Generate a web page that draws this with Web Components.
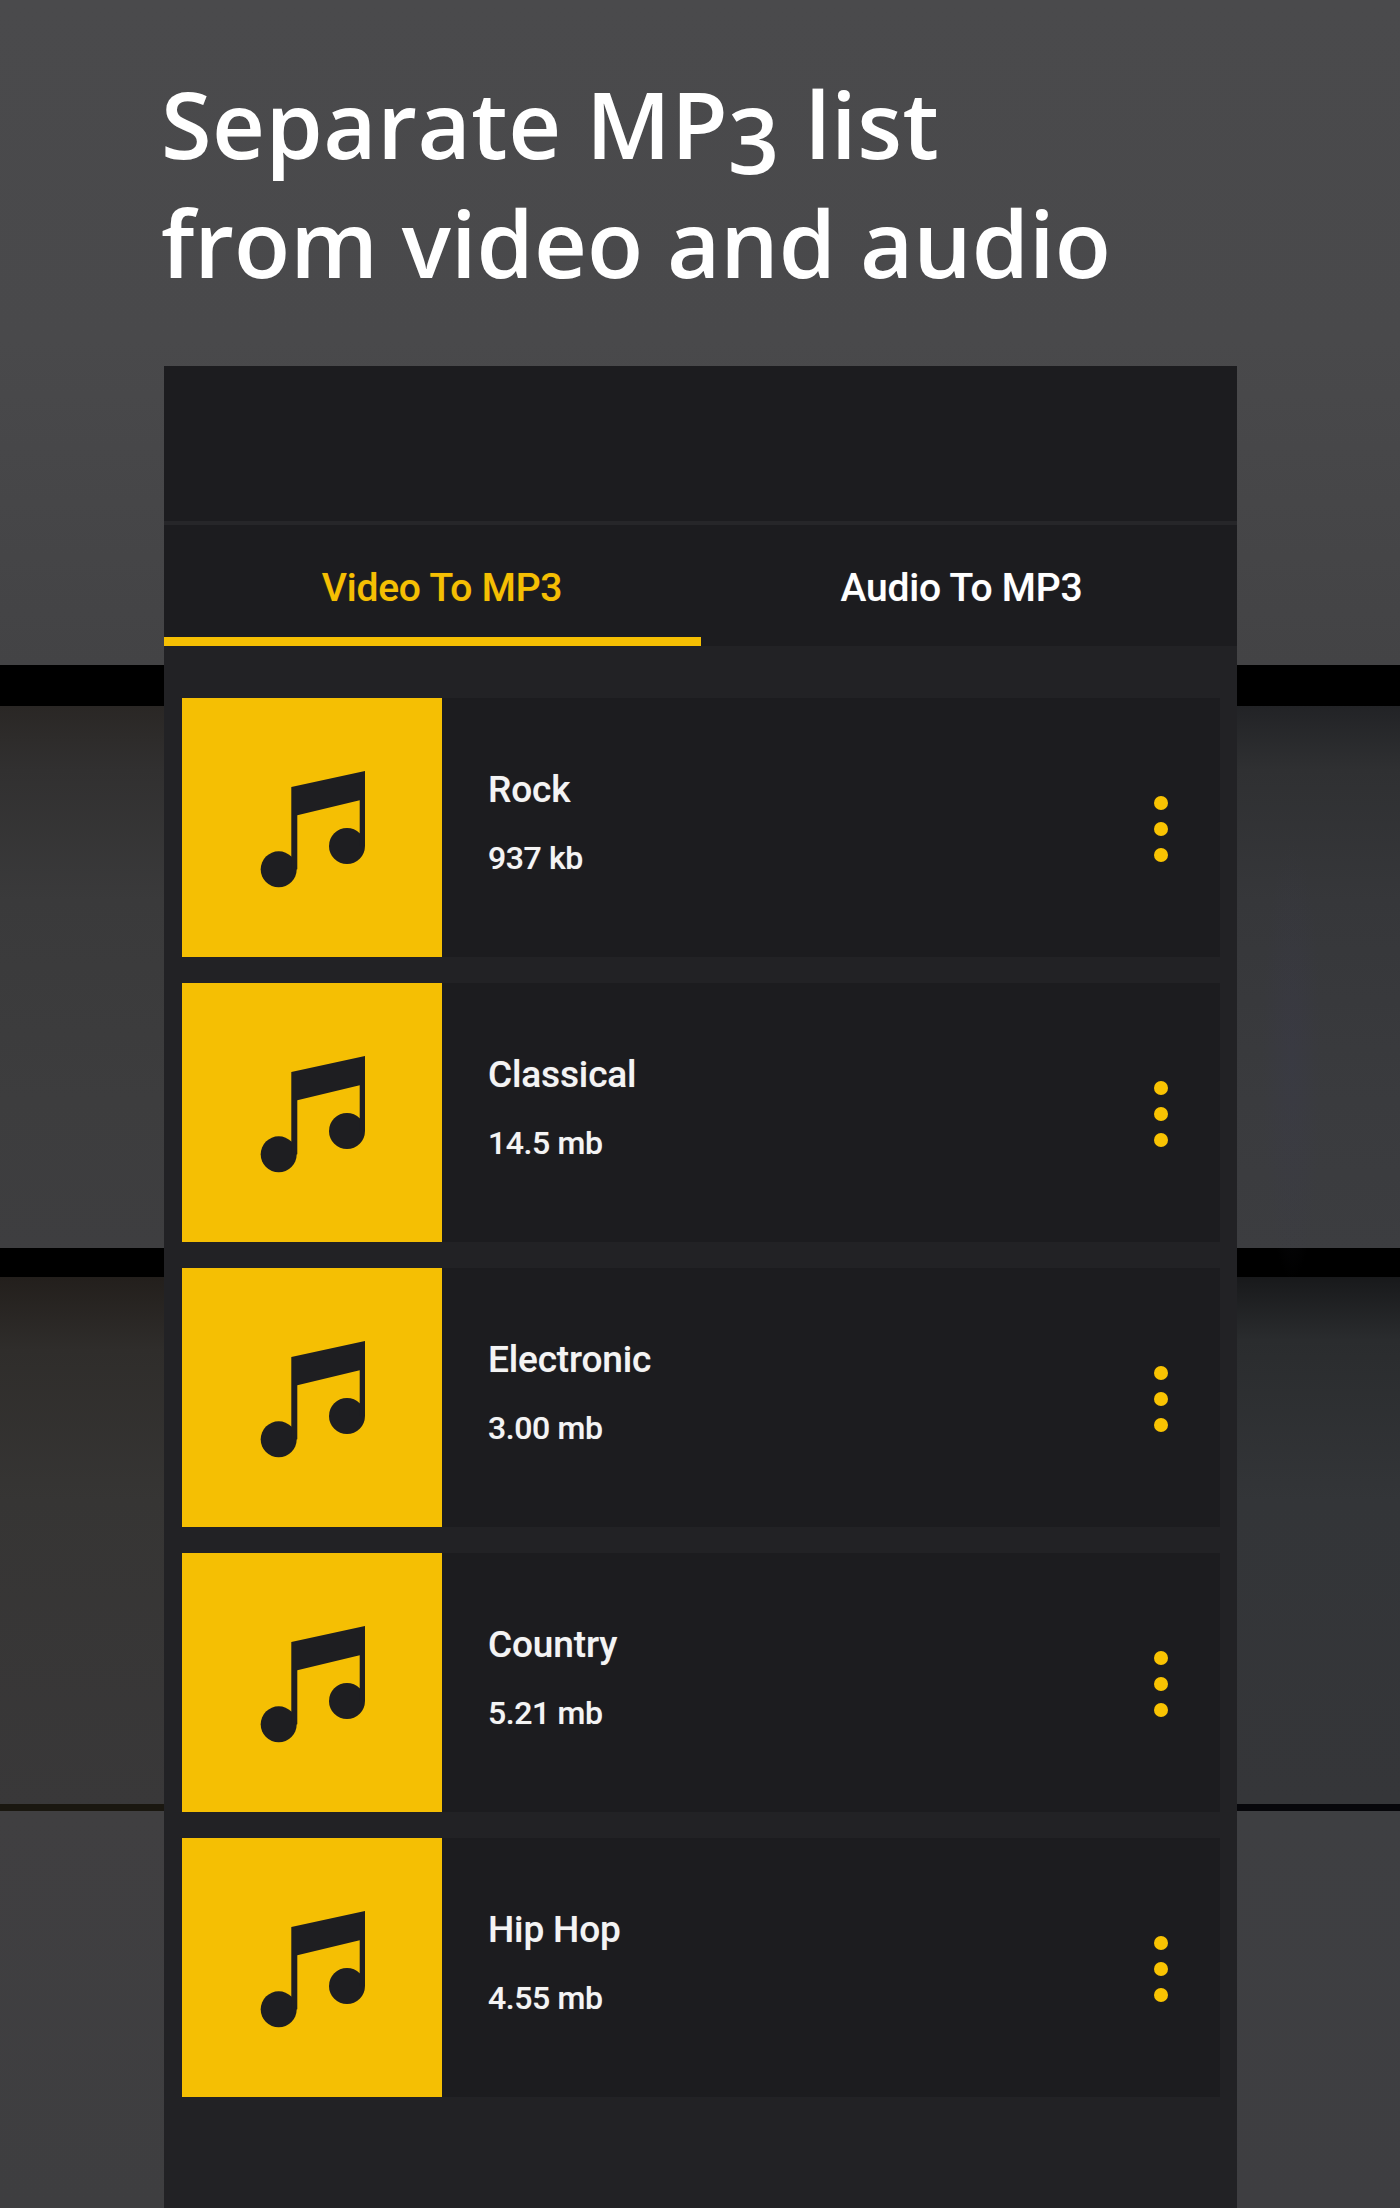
<!DOCTYPE html>
<html>
<head>
<meta charset="utf-8">
<title>Separate MP3 list</title>
<style>
  html, body { margin: 0; background: #3f3f41; }
</style>
</head>
<body>
<mp3-shot>
  <shot-title><span style="letter-spacing:.5px">Separate MP3 list</span><br>from video and audio</shot-title>
  <mp3-panel>
    <mp3-tab slot="tabs" active>Video To MP3</mp3-tab>
    <mp3-tab slot="tabs">Audio To MP3</mp3-tab>
    <mp3-row><span slot="name">Rock</span><span slot="size">937 kb</span></mp3-row>
    <mp3-row><span slot="name">Classical</span><span slot="size">14.5 mb</span></mp3-row>
    <mp3-row><span slot="name">Electronic</span><span slot="size">3.00 mb</span></mp3-row>
    <mp3-row><span slot="name">Country</span><span slot="size">5.21 mb</span></mp3-row>
    <mp3-row><span slot="name">Hip Hop</span><span slot="size">4.55 mb</span></mp3-row>
  </mp3-panel>
</mp3-shot>

<script>
class Mp3Shot extends HTMLElement {
  constructor() {
    super();
    this.attachShadow({ mode: "open" });
    // the wall behind the panel: left strip, right strip, and the whole width for the top part
    this.shadowRoot.innerHTML = `
      <style>
        :host {
          display: flex;
          flex-direction: column;
          width: 1400px;
          height: 2208px;
          overflow: hidden;
          background:
            radial-gradient(ellipse 30px 220px at 1292px 1060px, rgba(58,58,76,.35), rgba(58,58,76,0)),
            linear-gradient(180deg,
              rgba(0,0,0,0) 665px,
              #000 665px, #000 706px,
              #2a2725 706px, #313030 770px, #3a3a3b 900px, #3d3d3e 1100px, #3e3e40 1248px,
              #000 1248px, #000 1277px,
              #231f1c 1277px, #2f2d2b 1350px, #363534 1500px, #393839 1804px,
              #1a1710 1804px, #1a1710 1811px,
              #403f41 1811px, #3e3e40 2208px) left top / 164px 100% no-repeat,
            linear-gradient(180deg,
              rgba(0,0,0,0) 665px,
              #000 665px, #000 706px,
              #222326 706px, #2f3032 770px, #36373a 900px, #3a3b3e 1100px, #3c3d40 1248px,
              #000 1248px, #000 1277px,
              #18191b 1277px, #2a2c2e 1340px, #333538 1500px, #353639 1804px,
              #07070b 1804px, #07070b 1811px,
              #3e3f42 1811px, #3e3e41 2208px) right top / 163px 100% no-repeat,
            linear-gradient(180deg, #4a4a4c 0, #49494b 340px, #434345 665px);
        }
      </style>
      <slot></slot>
    `;
  }
}

class ShotTitle extends HTMLElement {
  constructor() {
    super();
    this.attachShadow({ mode: "open" });
    this.shadowRoot.innerHTML = `
      <style>
        :host {
          display: block;
          height: 366px;
          box-sizing: border-box;
          padding: 64px 0 0 161px;
          color: #fff;
          font: 600 92px/119px "Open Sans", sans-serif;
          font-variant-numeric: oldstyle-nums;
        }
      </style>
      <slot></slot>
    `;
  }
}

class Mp3Panel extends HTMLElement {
  constructor() {
    super();
    this.attachShadow({ mode: "open" });
    this.shadowRoot.innerHTML = `
      <style>
        :host {
          display: block;
          flex: 1;
          width: 1073px;
          margin-left: 164px;
          background: #222225;
        }
        #top {
          height: 155px;
          background: #1c1c1f;
          border-bottom: 4px solid #262629;
        }
        #tabs {
          display: flex;
          height: 121px;
          background: #1c1c1f;
        }
        #list {
          display: flex;
          flex-direction: column;
          gap: 26px;
          padding: 52px 17px 0 18px;
        }
      </style>
      <div id="top"></div>
      <div id="tabs"><slot name="tabs"></slot></div>
      <div id="list"><slot></slot></div>
    `;
  }
}

class Mp3Tab extends HTMLElement {
  constructor() {
    super();
    this.attachShadow({ mode: "open" });
    this.shadowRoot.innerHTML = `
      <style>
        :host {
          flex: 1;
          display: block;
          box-sizing: border-box;
          height: 121px;
          padding-top: 41px;
          text-align: center;
          color: #fff;
          font: 500 39px/44px Roboto, sans-serif;
          letter-spacing: -.2px;
          text-shadow: 0 0 1px rgba(255,255,255,.35);
        }
        :host([active]) {
          flex: 0 0 537px;
          color: #f5bf03;
          border-bottom: 9px solid #f5bf03;
          padding-left: 19px;
          text-shadow: 0 0 1px rgba(245,191,3,.35);
        }
        :host(:not([active])) {
          padding-right: 15px;
        }
      </style>
      <slot></slot>
    `;
  }
}

class NoteIcon extends HTMLElement {
  constructor() {
    super();
    this.attachShadow({ mode: "open" });
    this.shadowRoot.innerHTML = `
      <style>
        :host { display: block; width: 260px; height: 259px; background: #f5bf03; flex: none; }
        svg { display: block; }
      </style>
      <svg width="260" height="259" viewBox="0 0 260 259" fill="#1e1e21">
        <circle cx="96.7" cy="171.3" r="18"/>
        <circle cx="165" cy="148" r="18"/>
        <path d="M109.3 89 L183 73 V148 H177.7 V102.3 L115.3 117.3 V171.3 H109.3 Z"/>
      </svg>
    `;
  }
}

class MoreDots extends HTMLElement {
  constructor() {
    super();
    this.attachShadow({ mode: "open" });
    this.shadowRoot.innerHTML = `
      <style>
        :host {
          display: flex;
          flex-direction: column;
          gap: 12px;
          padding-top: 2px;
          margin-right: 52px;
          flex: none;
        }
        i { display: block; width: 14px; height: 14px; border-radius: 50%; background: #f9c302; }
      </style>
      <i></i><i></i><i></i>
    `;
  }
}

class Mp3Row extends HTMLElement {
  constructor() {
    super();
    this.attachShadow({ mode: "open" });
    this.shadowRoot.innerHTML = `
      <style>
        :host {
          display: flex;
          align-items: center;
          height: 259px;
          background: #1c1c1f;
          color: #f4f4f4;
          font-family: Roboto, sans-serif;
          font-weight: 500;
          text-shadow: 0 0 1px rgba(255,255,255,.35);
        }
        #info {
          flex: 1;
          align-self: flex-start;
          display: flex;
          flex-direction: column;
          gap: 26px;
          padding: 70px 0 0 46px;
        }
        #name { font-size: 37px; line-height: 44px; letter-spacing: -.15px; }
        #size { font-size: 32px; line-height: 40px; letter-spacing: -.4px; }
      </style>
      <note-icon></note-icon>
      <div id="info">
        <div id="name"><slot name="name"></slot></div>
        <div id="size"><slot name="size"></slot></div>
      </div>
      <more-dots></more-dots>
    `;
  }
}

customElements.define("mp3-shot", Mp3Shot);
customElements.define("shot-title", ShotTitle);
customElements.define("mp3-panel", Mp3Panel);
customElements.define("mp3-tab", Mp3Tab);
customElements.define("note-icon", NoteIcon);
customElements.define("more-dots", MoreDots);
customElements.define("mp3-row", Mp3Row);
</script>
</body>
</html>
